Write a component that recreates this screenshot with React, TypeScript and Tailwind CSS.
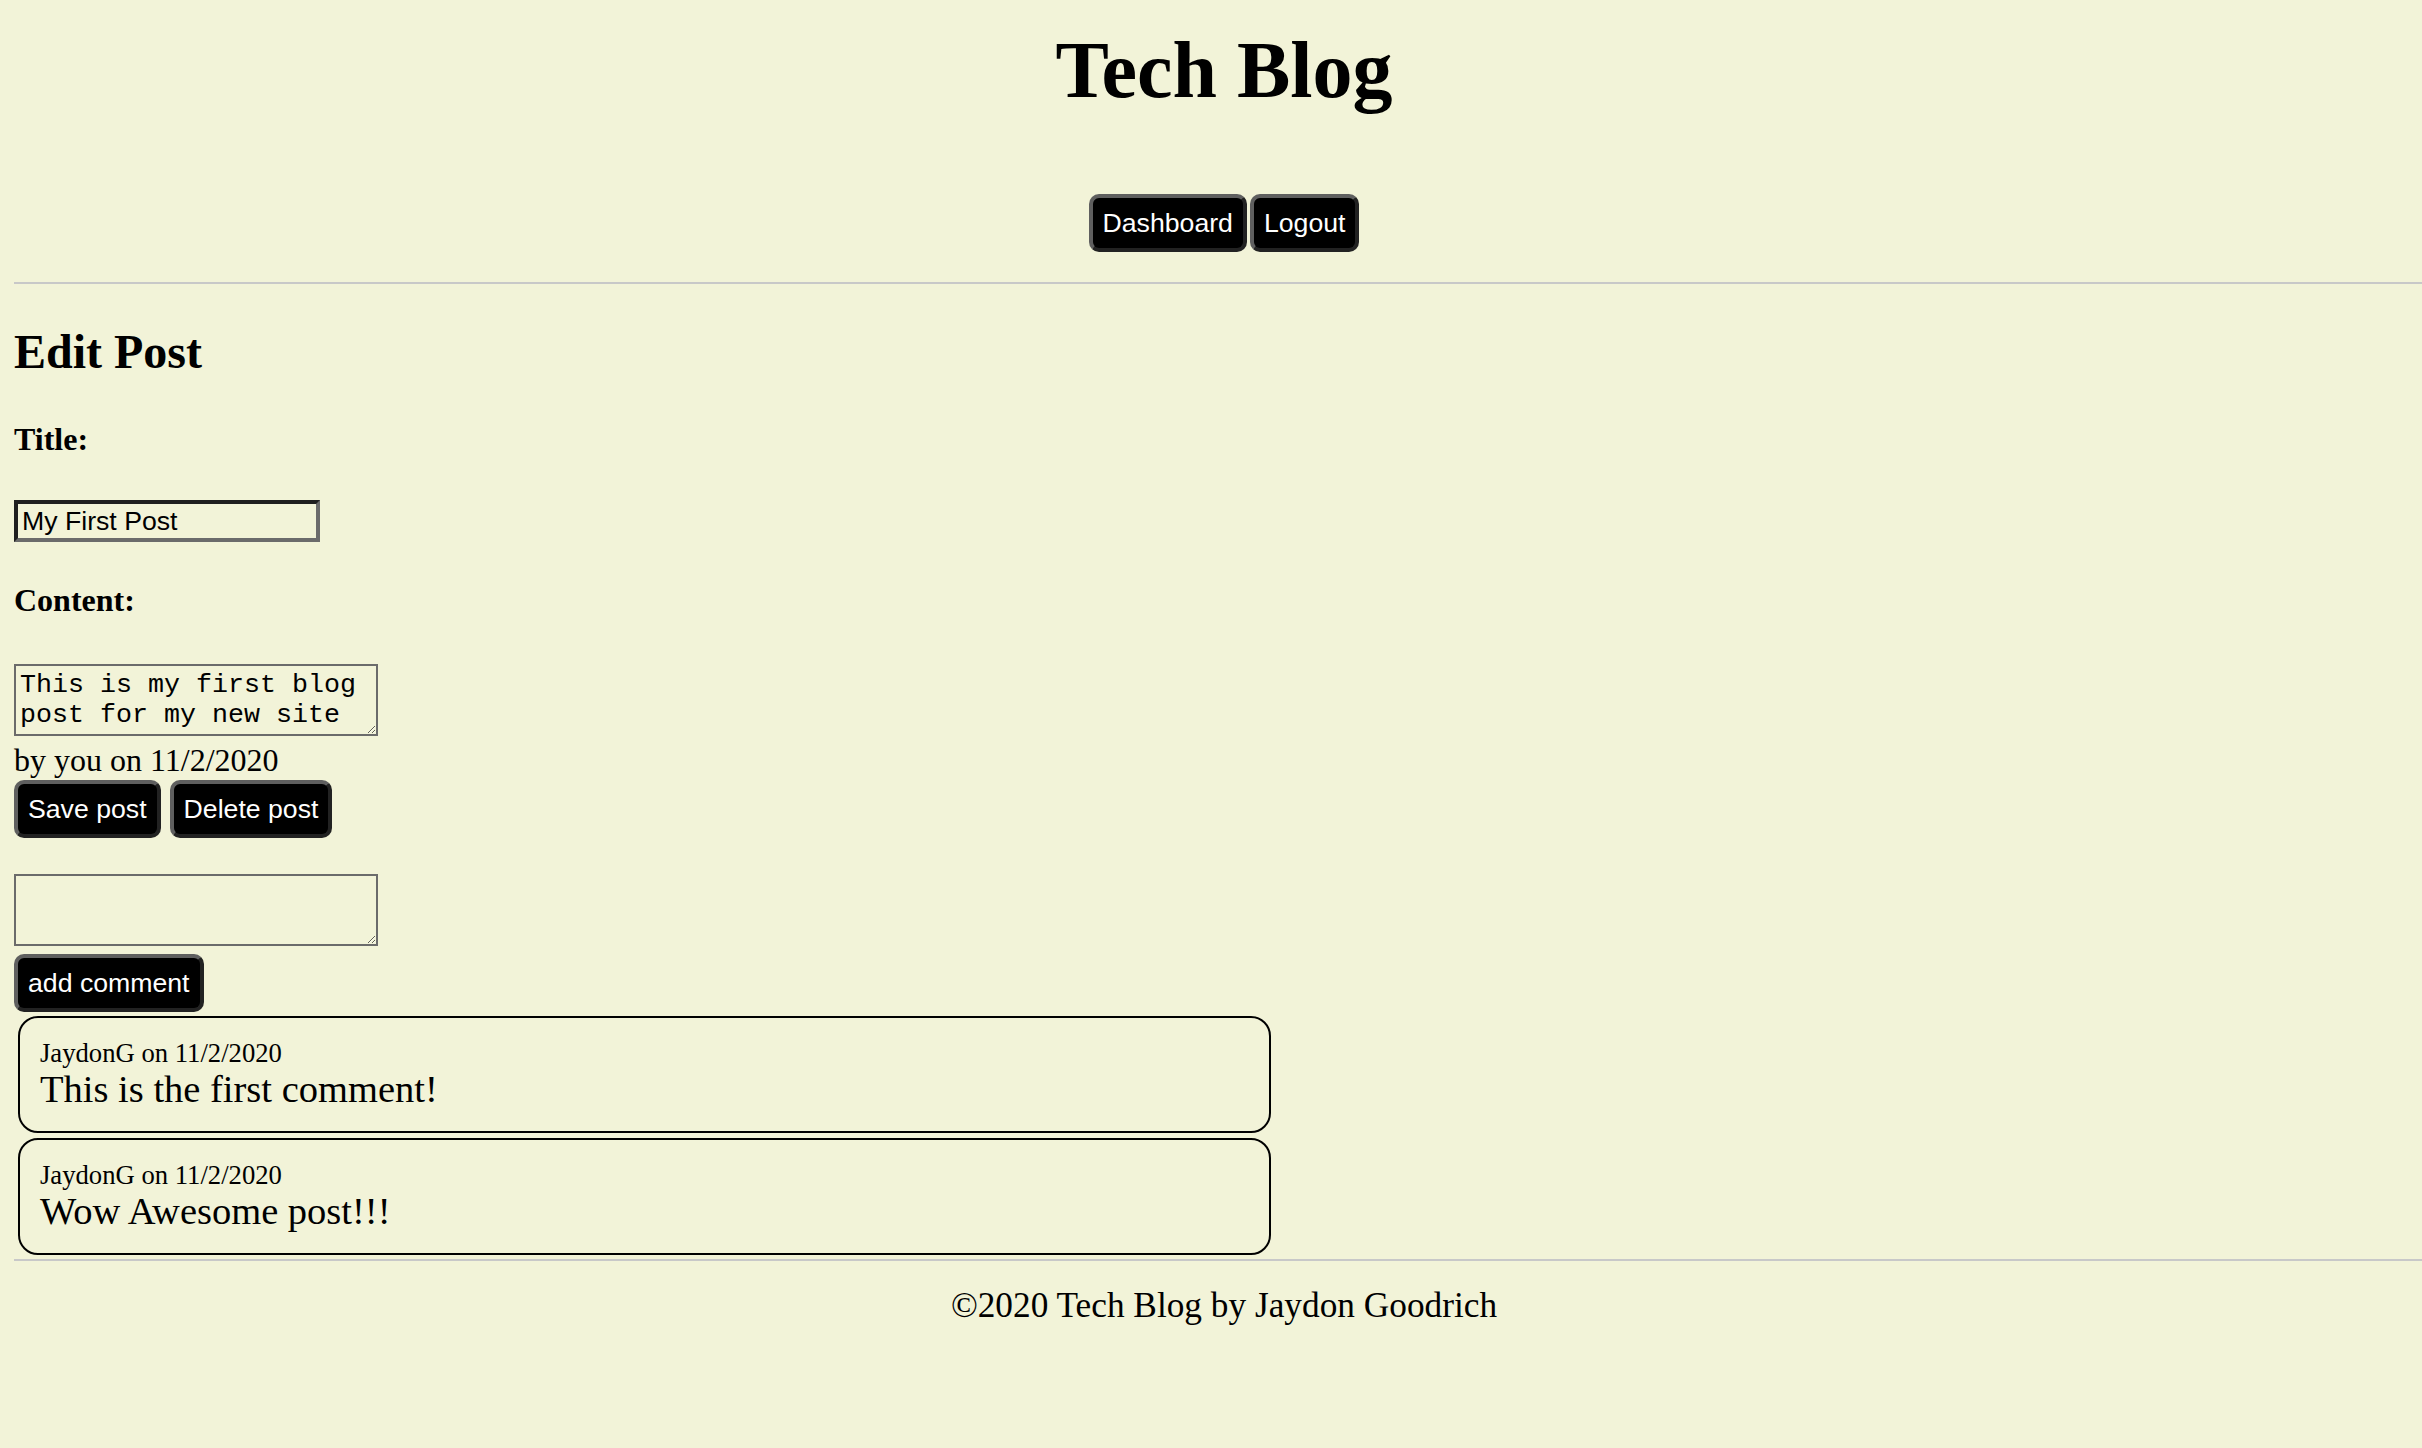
const buttonClass =
  "bg-black text-white font-['Liberation_Sans',Arial,sans-serif] text-[26.67px] leading-[30px] px-[10px] py-[10px] rounded-[10px] border-4 border-t-[#5f5f5f] border-l-[#5f5f5f] border-r-[#222222] border-b-[#222222]";

const comments = [
  { user: "JaydonG", date: "11/2/2020", text: "This is the first comment!" },
  { user: "JaydonG", date: "11/2/2020", text: "Wow Awesome post!!!" },
];

const App = () => {
  return (
    <div className="min-h-screen bg-[#f2f3d8] text-black font-['Liberation_Serif','Times_New_Roman',serif]">
      <header className="ml-[14px] pt-[24px] pb-[30px] border-b-2 border-[#c8c8c8]">
        <h1 className="pl-[12px] text-center text-[80px] font-bold leading-[92px]">
          Tech Blog
        </h1>
        <nav className="mt-[78px] pl-[12px] flex justify-center gap-[3px]">
          <button className={buttonClass}>Dashboard</button>
          <button className={buttonClass}>Logout</button>
        </nav>
      </header>

      <main className="ml-[14px] flex flex-col items-start">
        <h2 className="mt-[40px] text-[48px] font-bold leading-[55px]">Edit Post</h2>
        <form className="flex flex-col items-start" onSubmit={(e) => e.preventDefault()}>
          <label className="mt-[42px] text-[32px] font-bold leading-[37px]">Title:</label>
          <input
            className="mt-[42px] h-[42px] w-[306px] px-[4px] bg-transparent font-['Liberation_Sans',Arial,sans-serif] text-[26.67px] border-4 border-t-[#1f1f1f] border-l-[#1f1f1f] border-r-[#6b6b6b] border-b-[#6b6b6b] outline-none"
            type="text"
            defaultValue="My First Post"
          />
          <label className="mt-[40px] text-[32px] font-bold leading-[37px]">Content:</label>
          <textarea
            className="mt-[45px] h-[72px] w-[364px] p-[4px] bg-transparent border-2 border-[#6b6b6b] font-['Liberation_Mono','Courier_New',monospace] text-[26.67px] leading-[30px] outline-none"
            defaultValue="This is my first blog post for my new site"
          />
          <p className="mt-[6px] text-[32px] leading-[37px]">by you on 11/2/2020</p>
          <div className="mt-[1px] flex gap-[9px]">
            <button type="submit" className={buttonClass}>
              Save post
            </button>
            <button type="button" className={buttonClass}>
              Delete post
            </button>
          </div>
        </form>

        <form className="flex flex-col items-start" onSubmit={(e) => e.preventDefault()}>
          <textarea className="mt-[36px] h-[72px] w-[364px] p-[4px] bg-transparent border-2 border-[#6b6b6b] font-['Liberation_Mono','Courier_New',monospace] text-[26.67px] leading-[30px] outline-none" />
          <button type="submit" className={`mt-[8px] ${buttonClass}`}>
            add comment
          </button>
        </form>

        <div className="mt-[4px] ml-[4px] flex flex-col gap-[5px]">
          {comments.map((c, i) => (
            <div
              key={i}
              className="w-[1253px] border-2 border-black rounded-[20px] p-[20px]"
            >
              <p className="text-[26.67px] leading-[30px]">
                {c.user} on {c.date}
              </p>
              <p className="text-[38.5px] leading-[43px]">{c.text}</p>
            </div>
          ))}
        </div>
      </main>

      <footer className="mt-[4px] ml-[14px] pt-[25px] border-t-2 border-[#c8c8c8]">
        <p className="pl-[12px] text-center text-[35.3px] leading-[40px]">
          ©2020 Tech Blog by Jaydon Goodrich
        </p>
      </footer>
    </div>
  );
};

export default App;
